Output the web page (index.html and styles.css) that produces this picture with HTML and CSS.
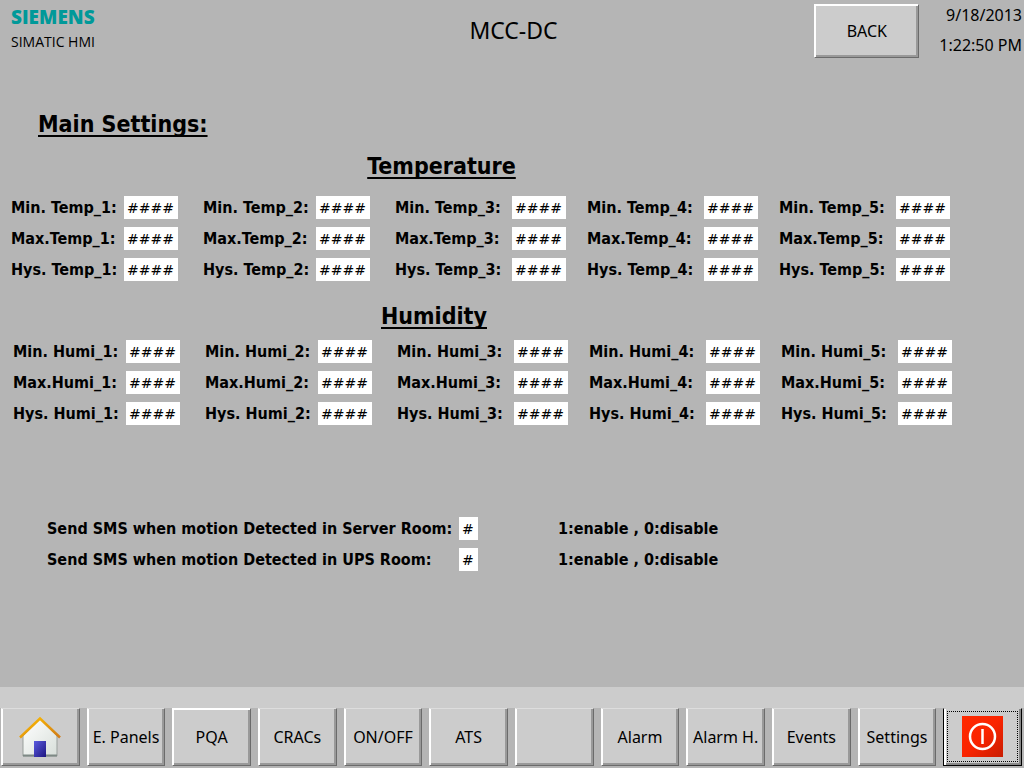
FILE: index.html
```html
<!DOCTYPE html>
<html lang="en"><head><meta charset="utf-8"><title>MCC-DC</title><link rel="stylesheet" href="styles.css"></head>
<body>
<header class="topbar">
  <div class="brand"><div class="brand-name">SIEMENS</div><div class="brand-product">SIMATIC HMI</div></div>
  <h1 class="title">MCC-DC</h1>
  <div class="top-right">
    <button class="btn btn-back" type="button">BACK</button>
    <div class="clock"><div>9/18/2013</div><div>1:22:50 PM</div></div>
  </div>
</header>
<main class="content">
  <h2 class="heading heading-main">Main Settings:</h2>
  <h3 class="heading heading-temp">Temperature</h3>
  <div class="grid" id="temp"></div>
  <h3 class="heading heading-humi">Humidity</h3>
  <div class="grid grid-humi" id="humi"></div>
  <div class="sms">
    <div class="sms-row"><label class="sms-label" for="sms1">Send SMS when motion Detected in Server Room:</label><input class="value value-one" id="sms1" value="#"><span>1:enable , 0:disable</span></div>
    <div class="sms-row"><label class="sms-label" for="sms2">Send SMS when motion Detected in UPS Room:</label><input class="value value-one" id="sms2" value="#"><span>1:enable , 0:disable</span></div>
  </div>
</main>
<footer class="footer">
  <div class="band"></div>
  <nav class="keys">
    <button class="btn" type="button" aria-label="Home">
      <svg width="42" height="42" viewBox="0 0 42 42"><defs><linearGradient id="wall" x2="1" y2="1"><stop stop-color="#fff"/><stop offset="1" stop-color="#d8dfda"/></linearGradient><linearGradient id="door" x2="1" y2="1"><stop stop-color="#5b5be0"/><stop offset="1" stop-color="#1e1680"/></linearGradient><linearGradient id="roof" x2="1" y2="1"><stop stop-color="#ffc000"/><stop offset="1" stop-color="#cf7a18"/></linearGradient></defs><path d="M4 20 21 3l17 17v20H4z" fill="url(#wall)" stroke="#999f9c"/><path d="M4 39.500h34" stroke="#7e8985" stroke-width="2"/><path d="M15 25h12v16H15z" fill="url(#door)"/><path d="M1 21.500 21 2.500 41 21.500" fill="none" stroke="url(#roof)" stroke-width="2.500"/></svg>
    </button>
    <button class="btn" type="button">E. Panels</button>
    <button class="btn btn-raised" type="button">PQA</button>
    <button class="btn" type="button">CRACs</button>
    <button class="btn" type="button">ON/OFF</button>
    <button class="btn" type="button">ATS</button>
    <button class="btn" type="button" aria-label="Unassigned"></button>
    <button class="btn" type="button">Alarm</button>
    <button class="btn" type="button">Alarm H.</button>
    <button class="btn" type="button">Events</button>
    <button class="btn" type="button">Settings</button>
    <button class="btn btn-power" type="button" aria-label="Exit"><span class="focus">
      <svg width="42" height="42" viewBox="0 0 42 42"><defs><linearGradient id="red" x2="1" y2="1"><stop stop-color="#ff2a00"/><stop offset=".5" stop-color="#fa2400"/><stop offset="1" stop-color="#c81c00"/></linearGradient></defs><path d="M0 0h41v41H0z" fill="url(#red)"/><circle cx="20.500" cy="20.500" r="12.500" fill="none" stroke="#fff" stroke-width="2.500"/><path d="M20.500 13v15" stroke="#fff" stroke-width="2.500"/></svg></span>
    </button>
  </nav>
</footer>
<script src="app.js"></script>
</body></html>
```
FILE: styles.css
```css
* { box-sizing: border-box; }
body { margin: 0; min-height: 100vh; display: flex; flex-direction: column; background: #b5b5b5; color: #000; font: 16px/24px "Noto Sans", sans-serif; }
.topbar { display: grid; grid-template-columns: 1fr auto 1fr; align-items: start; padding: 4px 2px 0 11px; }
.brand-name { color: #009999; font: 800 19px/26px "Open Sans", sans-serif; }
.brand-product { font: 14px/24px "Open Sans", sans-serif; }
.title { margin: 11px 6px 0 0; font-size: 23px; line-height: 30px; font-weight: 400; }
.top-right { display: flex; justify-content: flex-end; gap: 20px; }
.clock { text-align: right; line-height: 30px; margin-top: -4px; }
.btn { font: inherit; color: #000; background: #ccc; border: 1px solid; border-color: #fff #6b6b6b #6b6b6b #fff; box-shadow: inset 1px 1px #fff, inset -2px -2px #999; padding: 0; border-radius: 0; white-space: nowrap; display: flex; align-items: center; justify-content: center; min-width: 0; }
.btn-back { width: 105px; height: 54px; }
.content { flex: 1; font-family: "DejaVu Sans Condensed", "DejaVu Sans", sans-serif; }
.heading { margin: 0; font-size: 23px; line-height: 30px; font-weight: 700; text-decoration: underline; text-decoration-thickness: 2px; text-underline-offset: 3px; text-decoration-skip-ink: none; }
.heading-main { margin: 49px 0 0 38px; }
.heading-temp, .heading-humi { text-align: center; }
.heading-temp { margin: 12px 141px 0 0; }
.heading-humi { margin: 20px 156px 0 0; }
.grid { display: grid; grid-template-columns: repeat(5, 1fr); row-gap: 8px; padding: 15px 53px 0 11px; font-weight: 700; line-height: 23px; }
.grid-humi { padding: 9px 51px 0 13px; }
.field { display: flex; }
.field label { width: 113px; flex: none; white-space: nowrap; }
.field-wide label { width: 117px; }
.value { width: 54px; height: 23px; padding: 1px 0 0 3px; border: 0; background: #fff; color: #000; font: 14px/22px "DejaVu Sans", sans-serif; }
.value-one { width: 19px; }
.sms { display: grid; row-gap: 8px; padding: 92px 0 0 47px; font-weight: 700; line-height: 23px; }
.sms-row { display: flex; }
.sms-label { width: 412px; }
.sms-row span { margin-left: 80px; }
.band { height: 21px; background: #ccc; }
.keys { display: grid; grid-template-columns: repeat(12, minmax(0, 1fr)); gap: 7px; padding: 0 2px 2px 1px; }
.keys .btn { height: 58px; border-top-color: #ddd; box-shadow: inset 1px 0 #fff, inset -2px -2px #999; }
.keys .btn-raised { border-top-color: #fff; box-shadow: inset 1px 1px #fff, inset -2px -2px #999; }
.keys .btn-power { border-color: #ccc #000 #000; box-shadow: inset 2px 0 #fff, inset -2px -2px #888; padding: 2px 3px 3px; }
.focus { flex: 1; display: flex; align-items: center; justify-content: center; height: 100%; border: 1px dotted #000; }
```
FILE: app.js
```js
const rows = ["Min. ", "Max.", "Hys. "];
function build(id, name) {
  const grid = document.getElementById(id);
  for (const row of rows) {
    for (let n = 1; n <= 5; n++) {
      const key = id + row.slice(0, 3) + n;
      const cell = document.createElement("div");
      cell.className = n > 2 ? "field field-wide" : "field";
      cell.innerHTML = `<label for="${key}">${row}${name}_${n}:</label><input class="value" id="${key}" value="####">`;
      grid.append(cell);
    }
  }
}
build("temp", "Temp");
build("humi", "Humi");
```
